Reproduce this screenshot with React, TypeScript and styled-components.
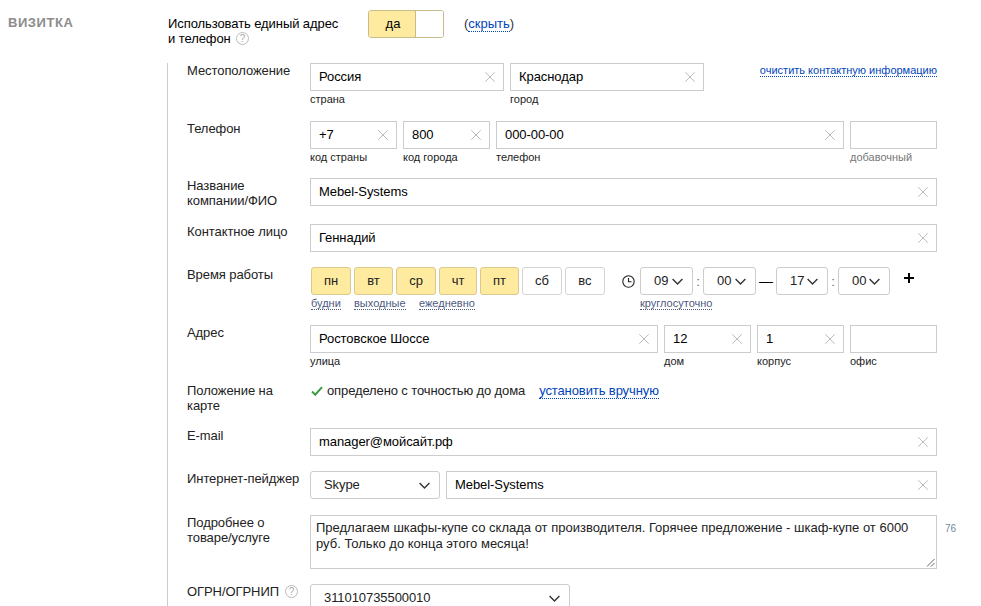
import React from "react";
import styled, { createGlobalStyle } from "styled-components";

const Global = createGlobalStyle`
  html, body { margin: 0; padding: 0; background: #fff; }
  body { font: 13px/15px "Liberation Sans", Arial, sans-serif; color: #000; }
`;

const Page = styled.div`
  position: relative;
  width: 981px;
  height: 606px;
  overflow: hidden;
`;
const Top = styled.header`
  display: flex;
  align-items: flex-start;
  height: 63px;
  box-sizing: border-box;
  padding-top: 10px;
`;
const Title = styled.h2`
  width: 168px;
  margin: 5px 0 0;
  padding-left: 8px;
  box-sizing: border-box;
  font-size: 13px;
  line-height: 15px;
  font-weight: 700;
  letter-spacing: 0.55px;
  color: #8c8c8c;
`;
const TopLabel = styled.div`
  width: 200px;
  margin-top: 6px;
  letter-spacing: -0.08px;
`;
const Switch = styled.div`
  display: flex;
  width: 76px;
  height: 28px;
  box-sizing: border-box;
  border: 1px solid #c9bb8a;
  border-radius: 3px;
  overflow: hidden;
`;
const SwitchOn = styled.div`
  width: 47px;
  padding-left: 2px;
  box-sizing: border-box;
  background: #ffeba0;
  border-right: 1px solid #c9bb8a;
  text-align: center;
  line-height: 26px;
`;
const SwitchOff = styled.div`
  flex: 1;
  background: #fff;
`;
const HideWrap = styled.div`
  margin: 6px 0 0 20px;
  color: #333;
`;
const Link = styled.span<{ $small?: boolean; $muted?: boolean }>`
  color: ${(p) => (p.$muted ? "#4d5a80" : "#0044bb")};
  font-size: ${(p) => (p.$small ? "11px" : "13px")};
  line-height: ${(p) => (p.$small ? "13px" : "15px")};
  border-bottom: 1px dotted ${(p) => (p.$muted ? "#4d5a80" : "#0044bb")};
  white-space: nowrap;
`;
const Section = styled.section`
  margin-left: 167px;
  padding-left: 19px;
  border-left: 1px solid #ccc;
  width: 750px;
  height: 543px;
  box-sizing: content-box;
`;
const Row = styled.div<{ $gap: number }>`
  display: grid;
  grid-template-columns: 123px 627px;
  margin-bottom: ${(p) => p.$gap}px;
`;
const Label = styled.div`
  line-height: 15px;
  color: #222;
  letter-spacing: -0.07px;
`;
const Fields = styled.div`
  display: flex;
  gap: 6px;
  position: relative;
`;
const Field = styled.div<{ $w: number }>`
  width: ${(p) => p.$w}px;
  flex: none;
`;
const InputBox = styled.div`
  display: flex;
  align-items: center;
  justify-content: space-between;
  height: 28px;
  box-sizing: border-box;
  border: 1px solid #ccc;
  padding: 0 8px 0 8px;
  background: #fff;
`;
const Value = styled.span`
  margin-bottom: 2px;
  letter-spacing: -0.07px;
`;
const Caption = styled.div<{ $muted?: boolean }>`
  font-size: 11px;
  line-height: 14px;
  margin-top: 1px;
  color: ${(p) => (p.$muted ? "#777" : "#222")};
`;
const ClearLink = styled.div`
  position: absolute;
  top: -1px;
  right: 0;
`;
const ClearSvg = styled.svg`
  width: 10px;
  height: 10px;
  flex: none;
`;
const Clear = () => (
  <ClearSvg viewBox="0 0 10 10">
    <path d="M.3.3l9.4 9.4M9.7.3L.3 9.7" stroke="#bbb" strokeWidth="1" fill="none" />
  </ClearSvg>
);
const TextInput = ({ w, value, caption, muted }: { w: number; value?: string; caption?: string; muted?: boolean }) => (
  <Field $w={w}>
    <InputBox>
      <Value>{value}</Value>
      {value ? <Clear /> : null}
    </InputBox>
    {caption ? <Caption $muted={muted}>{caption}</Caption> : null}
  </Field>
);

const DayRow = styled.div`
  display: flex;
  gap: 3px;
  margin-left: 1px;
`;
const Day = styled.div<{ $on?: boolean; $w: number }>`
  width: ${(p) => p.$w}px;
  height: 28px;
  box-sizing: border-box;
  border: 1px solid ${(p) => (p.$on ? "#d9c98f" : "#d4d4d4")};
  border-radius: 3px;
  background: ${(p) => (p.$on ? "#ffeba0" : "#fff")};
  text-align: center;
  line-height: 26px;
  color: #222;
`;
const DayLinks = styled.div`
  display: flex;
  margin: 0 0 0 1px;
`;
const DayLink = styled.div<{ $w: number }>`
  width: ${(p) => p.$w}px;
`;
const Schedule = styled.div`
  display: flex;
`;
const DaysColumn = styled.div`
  width: 312px;
  flex: none;
`;
const TimeColumn = styled.div`
  display: flex;
  flex-direction: column;
`;
const TimeRow = styled.div`
  display: flex;
  align-items: center;
  height: 28px;
`;
const ClockSvg = styled.svg`
  width: 13px;
  height: 13px;
  margin-right: 5px;
  flex: none;
`;
const Select = styled.div<{ $w: number }>`
  display: flex;
  align-items: center;
  justify-content: space-between;
  width: ${(p) => p.$w}px;
  height: 28px;
  box-sizing: border-box;
  border: 1px solid #ccc;
  border-radius: 3px;
  padding: 0 9px 0 13px;
  background: #fff;
  flex: none;
  color: #222;
`;
const Chevron = styled.svg`
  width: 11px;
  height: 7px;
  flex: none;
`;
const Chev = () => (
  <Chevron viewBox="0 0 11 7">
    <path d="M.6 1l4.9 4.9L10.4 1" stroke="#333" strokeWidth="1.4" fill="none" />
  </Chevron>
);
const Colon = styled.span`
  width: 10px;
  text-align: center;
  color: #667;
  flex: none;
`;
const Dash = styled.span`
  width: 20px;
  text-align: center;
  font-size: 14px;
  flex: none;
`;
const Plus = styled.svg`
  width: 10px;
  height: 10px;
  margin: -7px 0 0 14px;
  flex: none;
`;
const RoundLink = styled.div`
  margin: 0 0 0 18px;
`;
const MapRow = styled.div`
  display: flex;
  align-items: center;
  height: 15px;
  color: #222;
  letter-spacing: -0.12px;
`;
const Check = styled.svg`
  width: 12px;
  height: 10px;
  margin: 0 4px 0 1px;
  flex: none;
`;
const MapLink = styled.span`
  margin-left: 14px;
  letter-spacing: -0.1px;
`;
const TextArea = styled.div`
  position: relative;
  height: 54px;
  width: 627px;
  box-sizing: border-box;
  border: 1px solid #ccc;
  padding: 4px 20px 0 5px;
  line-height: 16px;
  color: #222;
`;
const Grip = styled.svg`
  position: absolute;
  right: 1px;
  bottom: 1px;
  width: 9px;
  height: 9px;
`;
const Counter = styled.div`
  position: absolute;
  left: 635px;
  top: 8px;
  font-size: 10px;
  line-height: 12px;
  color: #6f8a99;
`;
const Help = styled.svg`
  width: 13px;
  height: 13px;
  vertical-align: -2px;
  margin-left: 2px;
`;
const HelpIcon = () => (
  <Help viewBox="0 0 13 13">
    <circle cx="6.5" cy="6.5" r="6" fill="none" stroke="#bbb" />
    <text x="6.5" y="10" textAnchor="middle" fontSize="10" fill="#aaa" fontFamily="Liberation Sans">?</text>
  </Help>
);

export default function App() {
  return (
    <Page>
      <Global />
      <Top>
        <Title>ВИЗИТКА</Title>
        <TopLabel>
          Использовать единый адрес
          <br />и телефон <HelpIcon />
        </TopLabel>
        <Switch>
          <SwitchOn>да</SwitchOn>
          <SwitchOff />
        </Switch>
        <HideWrap>
          (<Link>скрыть</Link>)
        </HideWrap>
      </Top>
      <Section>
        <Row $gap={15}>
          <Label>Местоположение</Label>
          <Fields>
            <TextInput w={194} value="Россия" caption="страна" />
            <TextInput w={194} value="Краснодар" caption="город" />
            <ClearLink>
              <Link $small>очистить контактную информацию</Link>
            </ClearLink>
          </Fields>
        </Row>
        <Row $gap={14}>
          <Label>Телефон</Label>
          <Fields>
            <TextInput w={87} value="+7" caption="код страны" />
            <TextInput w={87} value="800" caption="код города" />
            <TextInput w={348} value="000-00-00" caption="телефон" />
            <TextInput w={87} caption="добавочный" muted />
          </Fields>
        </Row>
        <Row $gap={16}>
          <Label>
            Название
            <br />
            компании/ФИО
          </Label>
          <Fields>
            <TextInput w={627} value="Mebel-Systems" />
          </Fields>
        </Row>
        <Row $gap={15}>
          <Label>Контактное лицо</Label>
          <Fields>
            <TextInput w={627} value="Геннадий" />
          </Fields>
        </Row>
        <Row $gap={15}>
          <Label>Время работы</Label>
          <Schedule>
            <DaysColumn>
              <DayRow>
                <Day $on $w={40}>пн</Day>
                <Day $on $w={39}>вт</Day>
                <Day $on $w={40}>ср</Day>
                <Day $on $w={38}>чт</Day>
                <Day $on $w={39}>пт</Day>
                <Day $w={40}>сб</Day>
                <Day $w={40}>вс</Day>
              </DayRow>
              <DayLinks>
                <DayLink $w={43}><Link $small $muted>будни</Link></DayLink>
                <DayLink $w={65}><Link $small $muted>выходные</Link></DayLink>
                <DayLink $w={60}><Link $small $muted>ежедневно</Link></DayLink>
              </DayLinks>
            </DaysColumn>
            <TimeColumn>
              <TimeRow>
                <ClockSvg viewBox="0 0 13 13">
                  <circle cx="6.5" cy="6.5" r="5.7" fill="none" stroke="#222" strokeWidth="1.1" />
                  <path d="M6.5 3v3.8H9.5" fill="none" stroke="#222" strokeWidth="1.1" />
                </ClockSvg>
                <Select $w={53}><Value>09</Value><Chev /></Select>
                <Colon>:</Colon>
                <Select $w={53}><Value>00</Value><Chev /></Select>
                <Dash>—</Dash>
                <Select $w={52}><Value>17</Value><Chev /></Select>
                <Colon>:</Colon>
                <Select $w={52}><Value>00</Value><Chev /></Select>
                <Plus viewBox="0 0 10 10">
                  <path d="M5 0v10M0 5h10" stroke="#000" strokeWidth="2" />
                </Plus>
              </TimeRow>
              <RoundLink><Link $small $muted>круглосуточно</Link></RoundLink>
            </TimeColumn>
          </Schedule>
        </Row>
        <Row $gap={15}>
          <Label>Адрес</Label>
          <Fields>
            <TextInput w={348} value="Ростовское Шоссе" caption="улица" />
            <TextInput w={87} value="12" caption="дом" />
            <TextInput w={87} value="1" caption="корпус" />
            <TextInput w={87} caption="офис" />
          </Fields>
        </Row>
        <Row $gap={15}>
          <Label>
            Положение на
            <br />
            карте
          </Label>
          <MapRow>
            <Check viewBox="0 0 12 10">
              <path d="M1 5.5L4.3 8.7 11 1.2" fill="none" stroke="#3a9a3f" strokeWidth="2" />
            </Check>
            определено с точностью до дома
            <MapLink><Link>установить вручную</Link></MapLink>
          </MapRow>
        </Row>
        <Row $gap={15}>
          <Label>E-mail</Label>
          <Fields>
            <TextInput w={627} value="manager@мойсайт.рф" />
          </Fields>
        </Row>
        <Row $gap={16}>
          <Label>Интернет-пейджер</Label>
          <Fields>
            <Select $w={130}><Value>Skype</Value><Chev /></Select>
            <TextInput w={491} value="Mebel-Systems" />
          </Fields>
        </Row>
        <Row $gap={15}>
          <Label>
            Подробнее о
            <br />
            товаре/услуге
          </Label>
          <Fields>
            <TextArea>
              Предлагаем шкафы-купе со склада от производителя. Горячее предложение - шкаф-купе от 6000 руб. Только до конца этого месяца!
              <Grip viewBox="0 0 9 9">
                <path d="M1 8.5L8.5 1M5 8.5L8.5 5" stroke="#666" strokeWidth="1" fill="none" />
              </Grip>
            </TextArea>
            <Counter>76</Counter>
          </Fields>
        </Row>
        <Row $gap={0}>
          <Label>
            ОГРН/ОГРНИП <HelpIcon />
          </Label>
          <Fields>
            <Select $w={260}><Value>311010735500010</Value><Chev /></Select>
          </Fields>
        </Row>
      </Section>
    </Page>
  );
}
